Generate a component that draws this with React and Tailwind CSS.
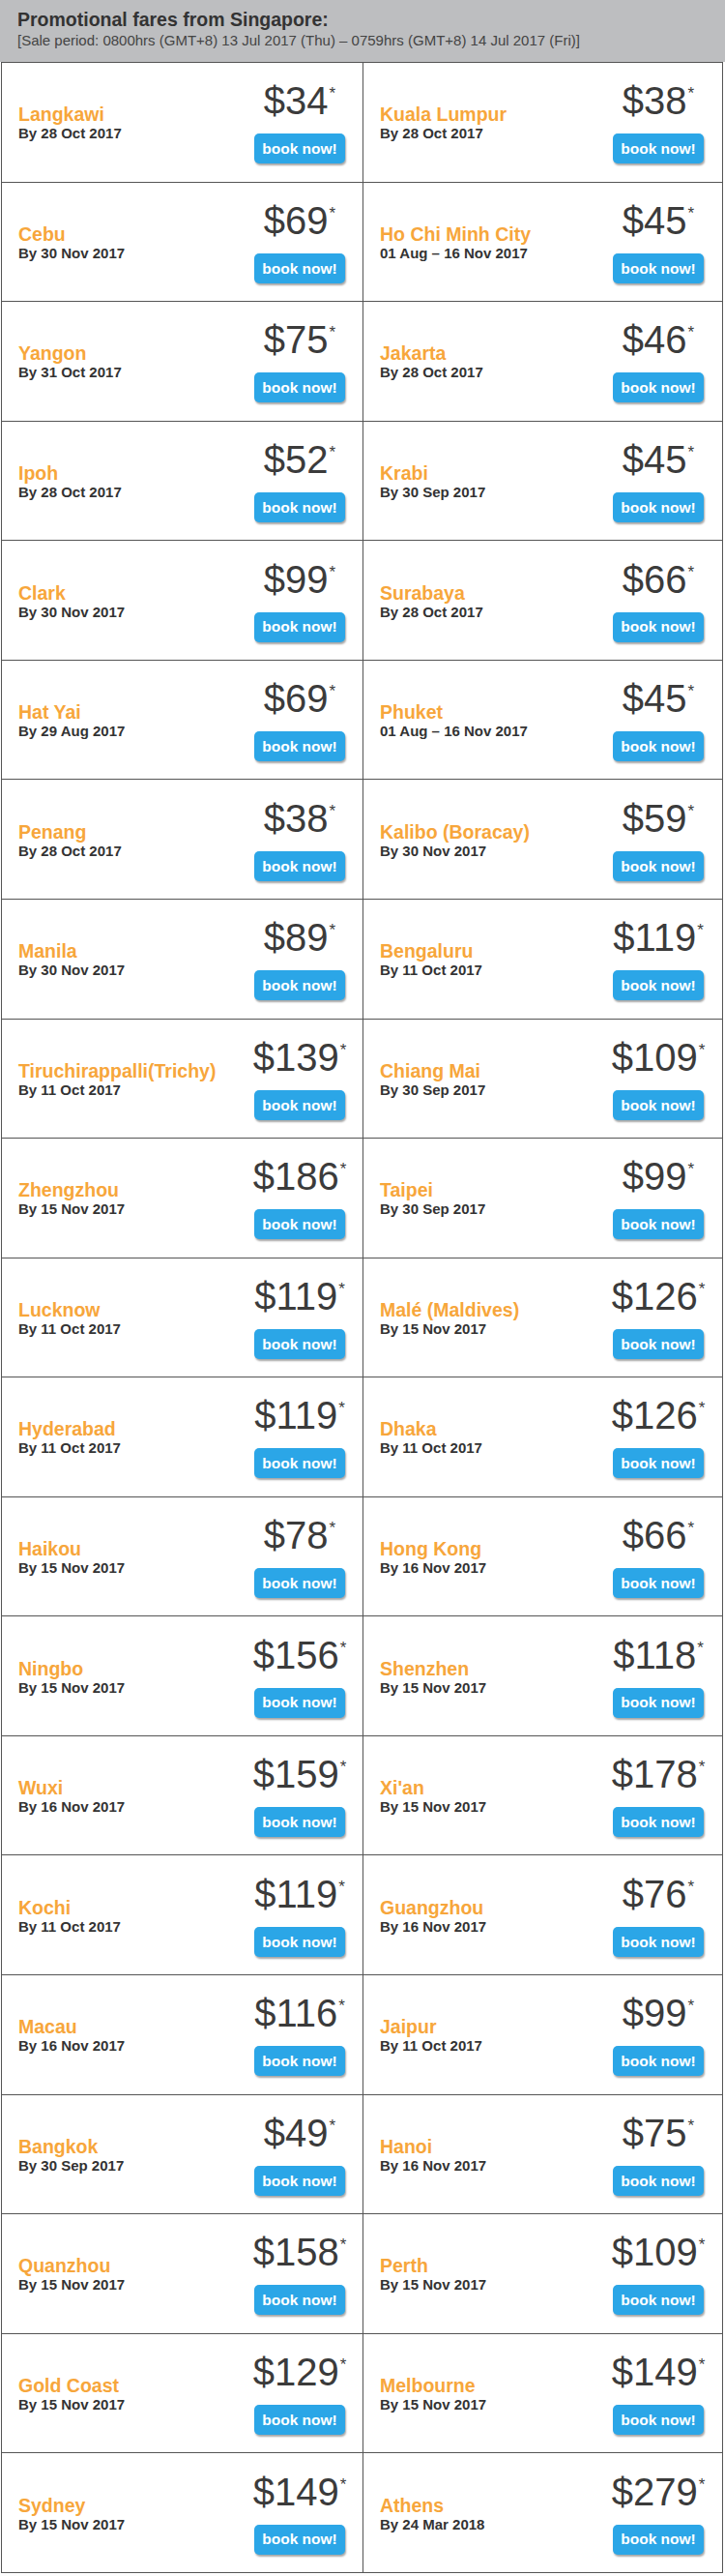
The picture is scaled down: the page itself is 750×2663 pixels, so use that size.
const FARES = [
  ['Langkawi', 'By 28 Oct 2017', 34], ['Kuala Lumpur', 'By 28 Oct 2017', 38],
  ['Cebu', 'By 30 Nov 2017', 69], ['Ho Chi Minh City', '01 Aug – 16 Nov 2017', 45],
  ['Yangon', 'By 31 Oct 2017', 75], ['Jakarta', 'By 28 Oct 2017', 46],
  ['Ipoh', 'By 28 Oct 2017', 52], ['Krabi', 'By 30 Sep 2017', 45],
  ['Clark', 'By 30 Nov 2017', 99], ['Surabaya', 'By 28 Oct 2017', 66],
  ['Hat Yai', 'By 29 Aug 2017', 69], ['Phuket', '01 Aug – 16 Nov 2017', 45],
  ['Penang', 'By 28 Oct 2017', 38], ['Kalibo (Boracay)', 'By 30 Nov 2017', 59],
  ['Manila', 'By 30 Nov 2017', 89], ['Bengaluru', 'By 11 Oct 2017', 119],
  ['Tiruchirappalli(Trichy)', 'By 11 Oct 2017', 139], ['Chiang Mai', 'By 30 Sep 2017', 109],
  ['Zhengzhou', 'By 15 Nov 2017', 186], ['Taipei', 'By 30 Sep 2017', 99],
  ['Lucknow', 'By 11 Oct 2017', 119], ['Malé (Maldives)', 'By 15 Nov 2017', 126],
  ['Hyderabad', 'By 11 Oct 2017', 119], ['Dhaka', 'By 11 Oct 2017', 126],
  ['Haikou', 'By 15 Nov 2017', 78], ['Hong Kong', 'By 16 Nov 2017', 66],
  ['Ningbo', 'By 15 Nov 2017', 156], ['Shenzhen', 'By 15 Nov 2017', 118],
  ['Wuxi', 'By 16 Nov 2017', 159], ["Xi'an", 'By 15 Nov 2017', 178],
  ['Kochi', 'By 11 Oct 2017', 119], ['Guangzhou', 'By 16 Nov 2017', 76],
  ['Macau', 'By 16 Nov 2017', 116], ['Jaipur', 'By 11 Oct 2017', 99],
  ['Bangkok', 'By 30 Sep 2017', 49], ['Hanoi', 'By 16 Nov 2017', 75],
  ['Quanzhou', 'By 15 Nov 2017', 158], ['Perth', 'By 15 Nov 2017', 109],
  ['Gold Coast', 'By 15 Nov 2017', 129], ['Melbourne', 'By 15 Nov 2017', 149],
  ['Sydney', 'By 15 Nov 2017', 149], ['Athens', 'By 24 Mar 2018', 279],
];

function FareCell({ city, date, price, left }) {
  return (
    <div className={`h-[123.57px] border-b border-[#555] flex items-center justify-between
      ${left ? 'border-r pl-[17px] pr-[18px]' : 'pl-[17px] pr-[19px]'}`}>
      <div className="pt-[2px]">
        <p className="text-[#f7a63b] font-bold text-[19.5px] leading-[22px]">{city}</p>
        <p className="text-[#333] font-bold text-[15px] leading-[18px]">{date}</p>
      </div>
      <div className="w-[94px] flex flex-col items-center flex-shrink-0 pt-[1px]">
        <div className="flex items-start whitespace-nowrap text-[#3b3b3b]">
          <span className="text-[40px] leading-none">${price}</span>
          <span className="text-[17px] leading-none mt-[4px] ml-[1px]">*</span>
        </div>
        <button className="mt-[14px] w-[94px] h-[31px] rounded-[5px] bg-[#2ba6e7] text-white font-bold text-[15.5px]
          shadow-[1px_2px_2px_rgba(0,0,0,0.35)]">
          book now!
        </button>
      </div>
    </div>
  );
}

export default function App() {
  return (
    <div className="w-[750px] bg-white" style={{ fontFamily: '"Liberation Sans", Arial, sans-serif' }}>

      {/* Header */}
      <div className="bg-[#bdbec0] h-[64px] px-[18px] pt-[9px]">
        <h1 className="text-[#333] font-bold text-[19.5px] leading-[23px]">Promotional fares from Singapore:</h1>
        <p className="text-[#444] text-[15px] leading-[20px]">
          [Sale period: 0800hrs (GMT+8) 13 Jul 2017 (Thu) – 0759hrs (GMT+8) 14 Jul 2017 (Fri)]
        </p>
      </div>

      {/* Fares grid */}
      <div className="ml-[1px] w-[747px] border-x border-t border-[#555] grid grid-cols-[374px_1fr]">
        {FARES.map(([city, date, price], i) => (
          <FareCell key={city} city={city} date={date} price={price} left={i % 2 === 0} />
        ))}
      </div>
    </div>
  );
}
